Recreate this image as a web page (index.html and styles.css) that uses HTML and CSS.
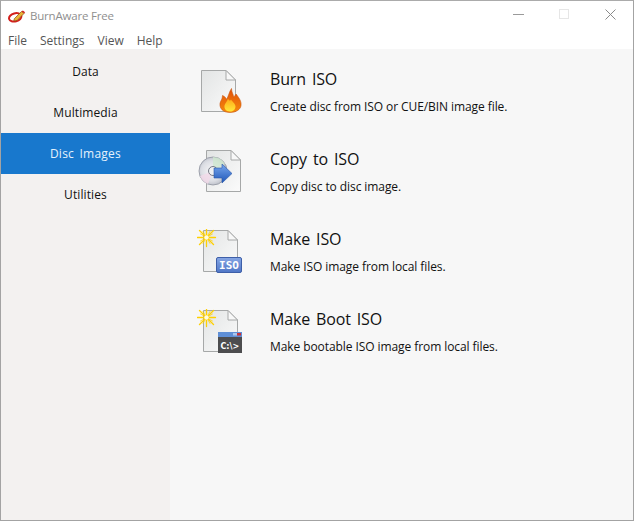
FILE: index.html
```html
<!DOCTYPE html>
<html lang="en">
<head>
<meta charset="utf-8">
<title>BurnAware Free</title>
<link rel="stylesheet" href="styles.css">
</head>
<body>
<svg class="defs" width="0" height="0" aria-hidden="true">
  <defs>
    <linearGradient id="page" x1="0" y1="0" x2="1" y2="1"><stop offset="0" stop-color="#e2e4e4"/><stop offset="1" stop-color="#fbfbfb"/></linearGradient>
    <linearGradient id="flame" x1="0" y1="0" x2="0" y2="1"><stop offset="0" stop-color="#e2500a"/><stop offset="1" stop-color="#f58a0c"/></linearGradient>
    <linearGradient id="core" x1="0" y1="0" x2="0" y2="1"><stop offset="0" stop-color="#ffa818"/><stop offset="1" stop-color="#ffe83a"/></linearGradient>
    <linearGradient id="arrow" x1="0" y1="0" x2="0" y2="1"><stop offset="0" stop-color="#78a8ee"/><stop offset="1" stop-color="#1f56b8"/></linearGradient>
    <radialGradient id="disc" cx="0.45" cy="0.5" r="0.6"><stop offset="0" stop-color="#f6f6f8"/><stop offset="0.6" stop-color="#dcdee4"/><stop offset="1" stop-color="#aeb2bd"/></radialGradient>
    <linearGradient id="badge" x1="0" y1="0" x2="0" y2="1"><stop offset="0" stop-color="#86a6e4"/><stop offset="1" stop-color="#4f76c6"/></linearGradient>
    <g id="doc">
      <path d="M0.500 0.500H25L34.500 10V41.500H0.500Z" fill="url(#page)" stroke="#a6a8a8"/>
      <path d="M25 0.500V10H34.500Z" fill="#f8f8f8" stroke="#a6a8a8"/>
    </g>
    <g id="spark" stroke="#ffd000" stroke-width="1.300" stroke-linecap="round">
      <path d="M9.500 0.500V18.500M0.500 9.500H18.500M2.500 2.500L16.500 16.500M16.500 2.500L2.500 16.500"/>
      <path d="M6 3.500L13 15.500M13 3.500L6 15.500M3.500 6L15.500 13M15.500 6L3.500 13" stroke-width="0.700"/>
      <circle cx="9.500" cy="9.500" r="2.200" fill="#fffce0" stroke="none"/>
    </g>
  </defs>
</svg>
<div class="window">
  <header class="titlebar">
    <svg class="logo" width="18" height="14" viewBox="0 0 20 14" aria-hidden="true">
      <ellipse cx="8" cy="8.500" rx="7" ry="4.500" fill="none" stroke="#d3201c" stroke-width="2.200" transform="rotate(-15 8 8.500)"/>
      <path d="M7 10L15 2L18 4L10 12L6.500 12.500Z" fill="#e9b437" stroke="#8a4a12" stroke-width="0.800"/>
      <path d="M15 2L16.500 0.800L19 2.800L18 4Z" fill="#d3201c"/>
    </svg>
    <span class="app-title">BurnAware Free</span>
    <div class="controls">
      <svg width="11" height="11" viewBox="0 0 11 11" aria-hidden="true"><path d="M0 5.500H11" stroke="#9a9a9a"/></svg>
      <svg width="11" height="11" viewBox="0 0 11 11" aria-hidden="true"><rect x="0.500" y="0.500" width="9" height="9" fill="none" stroke="#e6e6e6"/></svg>
      <svg width="11" height="11" viewBox="0 0 11 11" aria-hidden="true"><path d="M0.500 0.500L10.500 10.500M10.500 0.500L0.500 10.500" stroke="#8a8a8a"/></svg>
    </div>
  </header>
  <nav class="menubar">
    <span>File</span><span>Settings</span><span>View</span><span>Help</span>
  </nav>
  <div class="main">
    <aside class="sidebar">
      <div class="tab">Data</div>
      <div class="tab">Multimedia</div>
      <div class="tab active">Disc Images</div>
      <div class="tab">Utilities</div>
    </aside>
    <section class="content">
      <article class="task">
        <svg class="icon" width="50" height="50" viewBox="0 0 50 50" aria-hidden="true">
          <use href="#doc" x="4" y="1"/>
          <path d="M33 43.500C26 43.500 22.500 39.500 23 34.500C23.500 31.500 25.500 30.500 25.500 26.500C27.500 27.500 29 28.500 29.500 30.500C31.500 27.500 32 23 34.500 19.500C34.500 23.500 36.500 25 36.500 28C38 27 38.500 26 39 25C42.500 29.500 44.500 32.500 44 36.500C43.500 40.500 39 43.500 33 43.500Z" fill="url(#flame)" stroke="#c9540e" stroke-width="0.600"/>
          <path d="M33 42.500C29 42.500 27 39.500 27.500 36.500C28 34.500 30 33 31 29.500C32 32 33.500 32 34 30.500C35 32.500 38.500 34.500 38.500 37.500C38.500 40.500 36 42.500 33 42.500Z" fill="url(#core)"/>
        </svg>
        <div class="text"><h2>Burn ISO</h2><p>Create disc from ISO or CUE/BIN image file.</p></div>
      </article>
      <article class="task">
        <svg class="icon" width="50" height="50" viewBox="0 0 50 50" aria-hidden="true">
          <use href="#doc" x="9" y="1"/>
          <circle cx="16" cy="22" r="14" fill="url(#disc)" stroke="#8f939e" stroke-width="0.800"/>
          <path d="M16 8A14 14 0 0 1 28 15L16 22Z" fill="#cfe8cf" opacity="0.800"/>
          <path d="M16 22L3 27A14 14 0 0 0 11 35Z" fill="#f3d9e8" opacity="0.800"/>
          <circle cx="16" cy="22" r="4.500" fill="#eef0f3" stroke="#777b85"/>
          <path d="M17 19H25V15L35 24.500L25 34V29H17Z" fill="url(#arrow)" stroke="#2a58a8" stroke-width="0.600"/>
        </svg>
        <div class="text"><h2>Copy to ISO</h2><p>Copy disc to disc image.</p></div>
      </article>
      <article class="task">
        <svg class="icon" width="50" height="50" viewBox="0 0 50 50" aria-hidden="true">
          <use href="#doc" x="6" y="1"/>
          <use href="#spark" x="0" y="-1"/>
          <rect x="19.500" y="28.500" width="25" height="15" rx="1.500" fill="url(#badge)" stroke="#3e5fa8"/>
          <text x="32" y="40" class="badge-text">ISO</text>
        </svg>
        <div class="text"><h2>Make ISO</h2><p>Make ISO image from local files.</p></div>
      </article>
      <article class="task">
        <svg class="icon" width="50" height="50" viewBox="0 0 50 50" aria-hidden="true">
          <use href="#doc" x="6" y="1"/>
          <use href="#spark" x="0" y="-1"/>
          <rect x="21" y="23" width="24" height="21" fill="#4d4d4f"/>
          <rect x="21" y="23" width="24" height="5" fill="#5f8fd6"/>
          <rect x="40" y="24" width="4" height="2.500" fill="#c8333a"/>
          <rect x="36" y="24" width="4" height="2.500" fill="#a9c7ee"/>
          <text x="23.500" y="40" class="console-text">C:\&gt;</text>
        </svg>
        <div class="text"><h2>Make Boot ISO</h2><p>Make bootable ISO image from local files.</p></div>
      </article>
    </section>
  </div>
</div>
</body>
</html>
```
FILE: styles.css
```css
* { box-sizing: border-box; }
html, body { margin: 0; height: 100%; }
body { font-family: "Open Sans", "Noto Sans", sans-serif; font-size: 12px; color: #111; }
.defs { display: block; height: 0; }
.window { height: 521px; width: 634px; border: 1px solid #a3a3a3; border-top-color: #ababab; display: flex; flex-direction: column; background: #fff; overflow: hidden; }
.titlebar { height: 27px; flex: none; display: flex; align-items: center; padding: 2px 0 0 7px; }
.logo { margin-right: 4px; }
.app-title { color: #8f8f8f; font-size: 11.5px; letter-spacing: -0.2px; }
.controls { margin-left: auto; display: flex; gap: 35px; padding: 0 17px 2px 0; align-items: center; }
.controls svg { display: block; }
.menubar { height: 21px; flex: none; display: flex; gap: 13px; padding-left: 7px; color: #555; line-height: 26px; }
.main { flex: 1; display: flex; min-height: 0; }
.sidebar { width: 169px; flex: none; background: #f3f1f0; padding-top: 2px; }
.tab { height: 41px; display: flex; align-items: center; justify-content: center; color: #111; letter-spacing: 0.1px; }
.tab.active { background: #1878cd; color: #e4f1fc; letter-spacing: 0.25px; word-spacing: 2px; }
.content { flex: 1; background: #f7f7f7; padding: 17px 0 0 27px; }
.task { display: flex; height: 80px; align-items: flex-start; }
.icon { display: block; flex: none; margin-top: 3px; }
.text { margin: 1px 0 0 23px; }
.text h2 { margin: 0; font-size: 16px; font-weight: 400; line-height: 24px; color: #111; letter-spacing: -0.15px; word-spacing: 2px; }
.text p { margin: 7px 0 0; font-size: 12px; line-height: 18px; color: #111; letter-spacing: -0.08px; }
.badge-text { font-family: "DejaVu Sans Mono", monospace; font-weight: 700; font-size: 11px; fill: #fff; text-anchor: middle; }
.console-text { font-family: "DejaVu Sans", sans-serif; font-weight: 700; font-size: 8px; fill: #fff; }
```
